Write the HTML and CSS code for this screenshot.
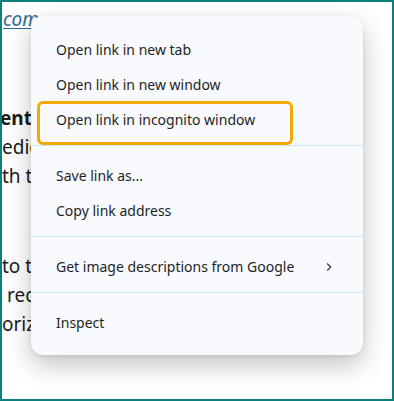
FILE: index.html
```html
<!DOCTYPE html>
<html lang="en">
<head>
    <meta charset="UTF-8">
    <meta name="viewport" content="width=device-width, initial-scale=1.0">
    <title>Context menu</title>
    <link rel="stylesheet" href="styles.css">
</head>
<body>
    <div class="frame">
        <!-- page text behind the menu -->
        <div class="page">
            <p class="line link-line"><a href="#" class="link">com</a></p>
            <p class="line bold first-block">ent S</p>
            <p class="line">edica</p>
            <p class="line">th th</p>
            <p class="line second-block">to th</p>
            <p class="line indent">rec</p>
            <p class="line">oriz</p>
        </div>

        <!-- context menu -->
        <div class="menu">
            <div class="item">Open link in new tab</div>
            <div class="item">Open link in new window</div>
            <div class="item marked">Open link in incognito window</div>
            <div class="sep"></div>
            <div class="item">Save link as...</div>
            <div class="item">Copy link address</div>
            <div class="sep"></div>
            <div class="item has-sub">
                <span>Get image descriptions from Google</span>
                <svg class="chevron" width="8" height="10" viewBox="0 0 8 10">
                    <path d="M2.2 1.5 L5.6 5 L2.2 8.5" fill="none" stroke="#4a4a4a" stroke-width="1.5"/>
                </svg>
            </div>
            <div class="sep"></div>
            <div class="item">Inspect</div>
        </div>
    </div>
</body>
</html>
```

FILE: styles.css
```css
* {
    margin: 0;
    padding: 0;
    box-sizing: border-box;
}
body {
    background: #fff;
    font-family: 'Noto Sans', 'Open Sans', sans-serif;
}
.frame {
    width: 394px;
    height: 401px;
    border: 2px solid #0b7f7c;
    position: relative;
    overflow: hidden;
    background: #fff;
}
.page {
    padding: 3px 0 0 0;
    color: #1b1b1b;
    font-size: 19px;
}
.line {
    line-height: 29px;
    white-space: nowrap;
}
.link-line {
    padding-left: 1px;
}
.link {
    color: #2a6b93;
    font-style: italic;
    text-decoration: underline;
    text-underline-offset: 2px;
}
.bold {
    font-weight: bold;
    margin-left: -2px;
}
.first-block {
    margin-top: 70px;
}
.second-block {
    margin-top: 61px;
}
.indent {
    padding-left: 5px;
}
.menu {
    position: absolute;
    left: 29px;
    top: 14px;
    width: 332px;
    height: 339px;
    background: #f8fafe;
    border-radius: 12px;
    padding: 16px 0 12px;
    box-shadow: 0 10px 26px rgba(0, 0, 0, 0.24), 0 1px 4px rgba(0, 0, 0, 0.08);
    font-size: 14px;
    color: #1f1f1f;
}
.item {
    height: 35px;
    display: flex;
    align-items: center;
    padding-left: 25px;
    padding-right: 30px;
    position: relative;
}
.item.has-sub {
    justify-content: space-between;
}
.marked::after {
    content: "";
    position: absolute;
    left: 6px;
    top: -1px;
    width: 250px;
    height: 38px;
    border: 3px solid #f6a800;
    border-radius: 6px;
}
.sep {
    height: 1px;
    background: #c9e5f8;
    margin: 8px 0 12px;
}
```
